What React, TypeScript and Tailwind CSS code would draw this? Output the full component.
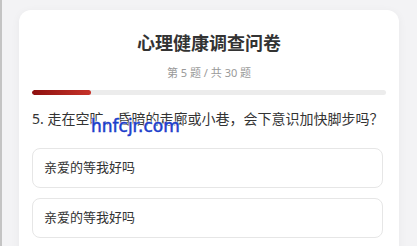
import React from 'react';

const options = ['亲爱的等我好吗', '亲爱的等我好吗'];

export default function App() {
	const current = 5;
	const total = 30;
	return (
		<div
			className="relative h-[246px] w-[417px] overflow-hidden border-l-2 border-[#c4c4c4] bg-[#f3f3f5]"
			style={{ fontFamily: '"Noto Sans", "Noto Sans CJK SC", sans-serif' }}
		>
			<div className="ml-[17px] mt-[10px] h-[260px] w-[380px] rounded-[12px] bg-white px-[13px] pt-[20px] shadow-[0_2px_10px_rgba(0,0,0,0.05)]">
				<h1 className="text-center text-[18px] font-bold leading-[26px] text-[#333]">心理健康调查问卷</h1>
				<p className="mt-[9px] text-center text-[11px] leading-[16px] text-[#999]">
					第 {current} 题 / 共 {total} 题
				</p>
				<div className="mt-[9px] h-[5px] w-full overflow-hidden rounded-full bg-[#ececec]">
					<div
						className="h-full rounded-full bg-gradient-to-r from-[#8e0f0f] to-[#c7332a]"
						style={{ width: `${(current / total) * 100}%` }}
					/>
				</div>
				<p className="mt-[14px] text-[14px] leading-[20px] text-[#333]">5. 走在空旷、昏暗的走廊或小巷，会下意识加快脚步吗？</p>
				<div className="mr-[3px] mt-[19px] flex flex-col gap-[10px]">
					{options.map((o, i) => (
						<div key={i} className="flex h-[40px] items-center rounded-[8px] border border-[#e6e6e6] px-[11px] text-[13px] text-[#333]">
							{o}
						</div>
					))}
				</div>
			</div>
			<span
				className="absolute left-[89px] top-[115px] text-[17px] leading-[22px] text-[#1c3ecb]"
				style={{
					fontFamily: '"DejaVu Sans", sans-serif',
					WebkitTextStroke: '0.5px #1c3ecb',
					textShadow: '0 0 2px #fff, 0 0 2px #fff, 0 0 2px #fff'
				}}
			>
				hnfcjr.com
			</span>
		</div>
	);
}
